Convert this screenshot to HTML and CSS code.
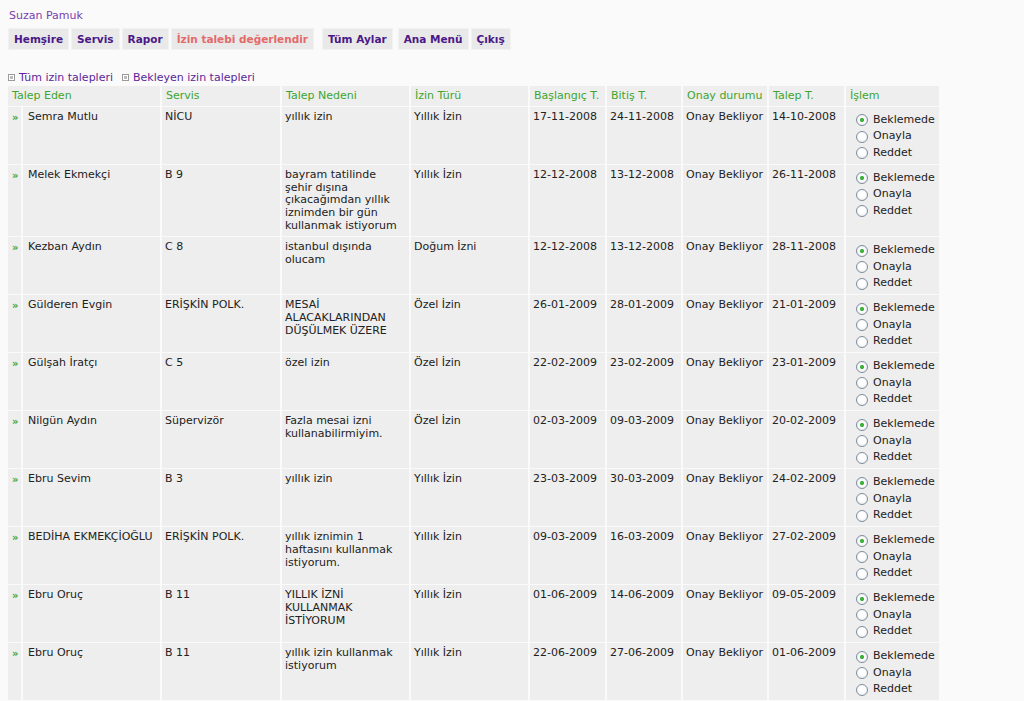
FILE: index.html
```html
<!DOCTYPE html>
<html lang="tr">
<head>
<meta charset="utf-8">
<title>İzin talepleri</title>
<link rel="stylesheet" href="styles.css">
</head>
<body>
<div class="user">Suzan Pamuk</div>
<nav class="menu">
  <a class="btn">Hemşire</a>
  <a class="btn">Servis</a>
  <a class="btn">Rapor</a>
  <a class="btn active">İzin talebi değerlendir</a>
  <a class="btn sep">Tüm Aylar</a>
  <a class="btn sep2">Ana Menü</a>
  <a class="btn">Çıkış</a>
</nav>
<div class="filters">
  <a class="flink"><span class="ico"></span>Tüm izin talepleri</a>
  <a class="flink"><span class="ico"></span>Bekleyen izin talepleri</a>
</div>
<table class="grid">
  <colgroup>
    <col class="c-arr"><col class="c-name"><col class="c-srv"><col class="c-ned"><col class="c-tur"><col class="c-bas"><col class="c-bit"><col class="c-onay"><col class="c-tal"><col class="c-isl">
  </colgroup>
  <thead>
    <tr>
      <th colspan="2">Talep Eden</th><th>Servis</th><th>Talep Nedeni</th><th>İzin Türü</th><th>Başlangıç T.</th><th>Bitiş T.</th><th>Onay durumu</th><th>Talep T.</th><th>İşlem</th>
    </tr>
  </thead>
  <tbody>
    <tr><td class="arr">»</td><td class="nm">Semra Mutlu</td><td>NİCU</td><td class="ned">yıllık izin</td><td>Yıllık İzin</td><td>17-11-2008</td><td>24-11-2008</td><td>Onay Bekliyor</td><td>14-10-2008</td>
      <td class="ops"><label><input type="radio" name="r1" checked>Beklemede</label><label><input type="radio" name="r1">Onayla</label><label><input type="radio" name="r1">Reddet</label></td></tr>
    <tr><td class="arr">»</td><td class="nm">Melek Ekmekçi</td><td>B 9</td><td class="ned">bayram tatilinde şehir dışına çıkacağımdan yıllık iznimden bir gün kullanmak istiyorum</td><td>Yıllık İzin</td><td>12-12-2008</td><td>13-12-2008</td><td>Onay Bekliyor</td><td>26-11-2008</td>
      <td class="ops"><label><input type="radio" name="r2" checked>Beklemede</label><label><input type="radio" name="r2">Onayla</label><label><input type="radio" name="r2">Reddet</label></td></tr>
    <tr><td class="arr">»</td><td class="nm">Kezban Aydın</td><td>C 8</td><td class="ned">istanbul dışında olucam</td><td>Doğum İzni</td><td>12-12-2008</td><td>13-12-2008</td><td>Onay Bekliyor</td><td>28-11-2008</td>
      <td class="ops"><label><input type="radio" name="r3" checked>Beklemede</label><label><input type="radio" name="r3">Onayla</label><label><input type="radio" name="r3">Reddet</label></td></tr>
    <tr><td class="arr">»</td><td class="nm">Gülderen Evgin</td><td>ERİŞKİN POLK.</td><td class="ned">MESAİ ALACAKLARINDAN DÜŞÜLMEK ÜZERE</td><td>Özel İzin</td><td>26-01-2009</td><td>28-01-2009</td><td>Onay Bekliyor</td><td>21-01-2009</td>
      <td class="ops"><label><input type="radio" name="r4" checked>Beklemede</label><label><input type="radio" name="r4">Onayla</label><label><input type="radio" name="r4">Reddet</label></td></tr>
    <tr><td class="arr">»</td><td class="nm">Gülşah İratçı</td><td>C 5</td><td class="ned">özel izin</td><td>Özel İzin</td><td>22-02-2009</td><td>23-02-2009</td><td>Onay Bekliyor</td><td>23-01-2009</td>
      <td class="ops"><label><input type="radio" name="r5" checked>Beklemede</label><label><input type="radio" name="r5">Onayla</label><label><input type="radio" name="r5">Reddet</label></td></tr>
    <tr><td class="arr">»</td><td class="nm">Nilgün Aydın</td><td>Süpervizör</td><td class="ned">Fazla mesai izni kullanabilirmiyim.</td><td>Özel İzin</td><td>02-03-2009</td><td>09-03-2009</td><td>Onay Bekliyor</td><td>20-02-2009</td>
      <td class="ops"><label><input type="radio" name="r6" checked>Beklemede</label><label><input type="radio" name="r6">Onayla</label><label><input type="radio" name="r6">Reddet</label></td></tr>
    <tr><td class="arr">»</td><td class="nm">Ebru Sevim</td><td>B 3</td><td class="ned">yıllık izin</td><td>Yıllık İzin</td><td>23-03-2009</td><td>30-03-2009</td><td>Onay Bekliyor</td><td>24-02-2009</td>
      <td class="ops"><label><input type="radio" name="r7" checked>Beklemede</label><label><input type="radio" name="r7">Onayla</label><label><input type="radio" name="r7">Reddet</label></td></tr>
    <tr><td class="arr">»</td><td class="nm">BEDİHA EKMEKÇİOĞLU</td><td>ERİŞKİN POLK.</td><td class="ned">yıllık iznimin 1 haftasını kullanmak istiyorum.</td><td>Yıllık İzin</td><td>09-03-2009</td><td>16-03-2009</td><td>Onay Bekliyor</td><td>27-02-2009</td>
      <td class="ops"><label><input type="radio" name="r8" checked>Beklemede</label><label><input type="radio" name="r8">Onayla</label><label><input type="radio" name="r8">Reddet</label></td></tr>
    <tr><td class="arr">»</td><td class="nm">Ebru Oruç</td><td>B 11</td><td class="ned">YILLIK İZNİ KULLANMAK İSTİYORUM</td><td>Yıllık İzin</td><td>01-06-2009</td><td>14-06-2009</td><td>Onay Bekliyor</td><td>09-05-2009</td>
      <td class="ops"><label><input type="radio" name="r9" checked>Beklemede</label><label><input type="radio" name="r9">Onayla</label><label><input type="radio" name="r9">Reddet</label></td></tr>
    <tr><td class="arr">»</td><td class="nm">Ebru Oruç</td><td>B 11</td><td class="ned">yıllık izin kullanmak istiyorum</td><td>Yıllık İzin</td><td>22-06-2009</td><td>27-06-2009</td><td>Onay Bekliyor</td><td>01-06-2009</td>
      <td class="ops"><label><input type="radio" name="r10" checked>Beklemede</label><label><input type="radio" name="r10">Onayla</label><label><input type="radio" name="r10">Reddet</label></td></tr>
  </tbody>
</table>
</body>
</html>
```

FILE: styles.css
```css
html, body {
  background: #fafafa;
}
body {
  margin: 8px;
  font-family: "DejaVu Sans", Verdana, sans-serif;
  font-size: 11px;
  color: #222222;
}
.user {
  color: #7a3db0;
  padding: 1px 0 0 1px;
  height: 18px;
}
.menu {
  display: flex;
  gap: 2px;
  height: 22px;
  margin-top: 1px;
}
.btn {
  display: flex;
  align-items: center;
  padding: 0 5px 0 5px;
  background: #e9e9e9;
  border: 1px solid #f2f2f2;
  font-weight: bold;
  font-size: 10.5px;
  color: #4b1888;
  cursor: pointer;
}
.btn.active {
  color: #e46a6a;
}
.btn.sep {
  margin-left: 6px;
}
.btn.sep2 {
  margin-left: 3px;
}
.filters {
  margin-top: 20px;
  display: flex;
  gap: 9px;
  height: 14px;
  align-items: center;
}
.flink {
  color: #5a1f9a;
  display: flex;
  align-items: center;
}
.ico {
  width: 5px;
  height: 5px;
  border: 1px solid #9a9a9a;
  background: #fff;
  margin-right: 4px;
  box-shadow: inset 0 0 0 1px #fff, inset 0 0 0 3px #bbb;
}
.grid {
  border-collapse: separate;
  border-spacing: 2px 1px;
  margin: 1px 0 0 -2px;
  table-layout: fixed;
  width: 935px;
}
.c-arr { width: 13px; }
.c-name { width: 137px; }
.c-srv { width: 118px; }
.c-ned { width: 127px; }
.c-tur { width: 117px; }
.c-bas { width: 75px; }
.c-bit { width: 74px; }
.c-onay { width: 84px; }
.c-tal { width: 75px; }
.c-isl { width: 93px; }
.grid th, .grid td {
  background: #eeeeee;
  text-align: left;
  vertical-align: top;
  padding: 4px 3px 3.5px;
  line-height: 12.8px;
  box-sizing: border-box;
}
.grid th {
  color: #3da52f;
  font-weight: normal;
  padding: 4px 3px 3px 4px;
}
.grid td.arr {
  color: #3fa532;
  font-weight: bold;
  font-size: 10px;
  padding: 5px 0 0 4px;
}
.grid td.nm {
  padding-left: 5px;
  white-space: nowrap;
}
.grid td.ned {
  padding-right: 9px;
}
.grid td.ops {
  padding: 5px 0 2.5px 9px;
}
.ops label {
  display: flex;
  align-items: center;
  height: 16.5px;
  white-space: nowrap;
}
.ops input {
  appearance: none;
  -webkit-appearance: none;
  width: 12px;
  height: 12px;
  margin: 0 5px 0 1px;
  border: 1px solid #7d8d9d;
  border-radius: 50%;
  background: radial-gradient(circle at 50% 40%, #ffffff 40%, #e4e6ea 100%);
  box-sizing: border-box;
  flex: none;
}
.ops input:checked {
  background: radial-gradient(circle, #3cb43c 0 1.8px, #ffffff 2.4px, #e4e6ea 100%);
}
```
